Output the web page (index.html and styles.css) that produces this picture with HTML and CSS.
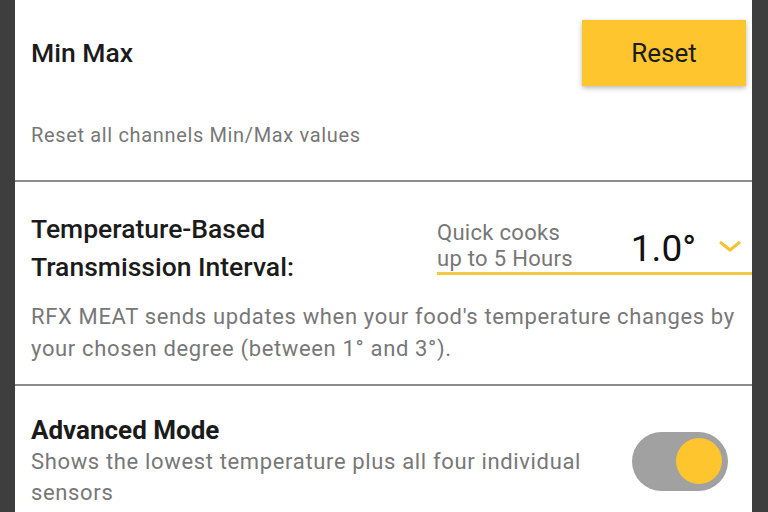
FILE: index.html
```html
<!DOCTYPE html>
<html>
<head>
<meta charset="utf-8">
<link rel="stylesheet" href="styles.css">
</head>
<body>
<div class="panel">
  <section class="sec sec-minmax">
    <div class="row">
      <h2 class="title">Min Max</h2>
      <button class="btn">Reset</button>
    </div>
    <p class="desc desc-minmax">Reset all channels Min/Max values</p>
  </section>
  <div class="divider"></div>
  <section class="sec sec-interval">
    <div class="row">
      <h2 class="title title-two">Temperature-Based<br>Transmission Interval:</h2>
      <div class="dropdown">
        <div class="dd-label">Quick cooks<br>up to 5 Hours</div>
        <div class="dd-value">1.0°</div>
        <svg class="chev" width="24" height="12" viewBox="0 0 24 12"><path d="M2 2 L12 10 L22 2" fill="none" stroke="#f6c22e" stroke-width="3"/></svg>
      </div>
    </div>
    <p class="desc desc-interval">RFX MEAT sends updates when your food's temperature changes by your chosen degree (between 1° and 3°).</p>
  </section>
  <div class="divider"></div>
  <section class="sec sec-adv">
    <div class="adv-text">
      <h2 class="title title-bold">Advanced Mode</h2>
      <p class="desc desc-adv">Shows the lowest temperature plus all four individual sensors</p>
    </div>
    <div class="toggle"><div class="thumb"></div></div>
  </section>
</div>
</body>
</html>
```

FILE: styles.css
```css
html, body {
  margin: 0;
  padding: 0;
  height: 512px;
  overflow: hidden;
  background: #3e3e3e;
  font-family: Roboto, "Noto Sans", sans-serif;
}
.panel {
  margin: 0 16px 0 15px;
  background: #ffffff;
  min-height: 512px;
}
.sec {
  padding-left: 16px;
}
.row {
  display: flex;
  align-items: center;
}
.title {
  margin: 0;
  font-size: 26.5px;
  font-weight: 500;
  color: #1b1b1b;
  line-height: 38px;
}
.title-bold {
  font-size: 26px;
  font-weight: 700;
  line-height: 32px;
}
.desc {
  margin: 0;
  font-size: 22px;
  color: #777777;
  letter-spacing: 0.65px;
}
.sec-minmax {
  padding-top: 20px;
  padding-bottom: 30px;
}
.sec-minmax .row {
  padding-right: 6px;
  justify-content: space-between;
}
.btn {
  width: 164px;
  height: 66px;
  border: none;
  background: #fec52e;
  color: #1b1b1b;
  font-family: Roboto, sans-serif;
  font-size: 26px;
  box-shadow: 0 2px 5px rgba(0, 0, 0, 0.28);
  padding: 0;
}
.desc-minmax {
  font-size: 20px;
  margin-top: 34px;
  line-height: 30px;
}
.divider {
  height: 2px;
  background: #8c8c8c;
}
.sec-interval {
  padding-top: 28px;
  padding-bottom: 19px;
}
.dropdown {
  margin-left: auto;
  width: 315px;
  display: flex;
  align-items: center;
  border-bottom: 3px solid #f4ca45;
  height: 51px;
}
.dd-label {
  flex: 1;
  font-size: 22px;
  line-height: 26px;
  letter-spacing: 0.3px;
  color: #777777;
  margin-top: -2px;
}
.dd-value {
  font-size: 37px;
  color: #111111;
  line-height: 40px;
  margin-right: 22px;
  padding-top: 4px;
}
.chev {
  margin-right: 10px;
  margin-bottom: 2px;
}
.desc-interval {
  margin-top: 15px;
  line-height: 32px;
  padding-right: 16px;
}
.sec-adv {
  padding-top: 28px;
  display: flex;
  align-items: center;
  padding-right: 24px;
}
.adv-text {
  flex: 1;
  padding-right: 40px;
}
.desc-adv {
  line-height: 31px;
}
.toggle {
  width: 96px;
  height: 59px;
  border-radius: 30px;
  background: #a1a1a1;
  display: flex;
  align-items: center;
  justify-content: flex-end;
  padding-right: 6px;
  box-sizing: border-box;
}
.thumb {
  width: 46px;
  height: 46px;
  border-radius: 50%;
  background: #fec52e;
}
```
